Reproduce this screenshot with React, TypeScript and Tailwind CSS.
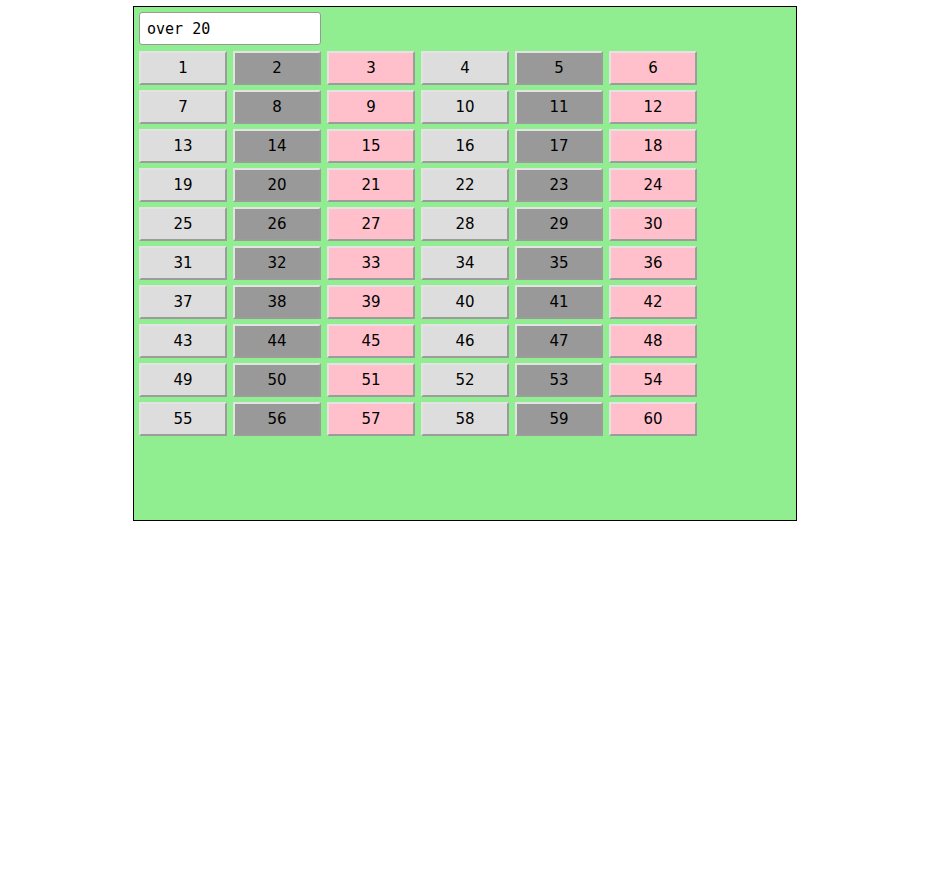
import React, { useState } from "react"

const colors = [
  "bg-[#dddddd]",
  "bg-[#999999]",
  "bg-[#ffc0cb]",
]

export default function App() {
  const [text, setText] = useState("over 20")
  const nums = Array.from({ length: 60 }, (_, i) => i + 1)

  return (
    <div className="pt-[6px] pl-[133px]">
      <div className="w-[664px] h-[515px] border border-black bg-[#90ee90] p-[5px]">
        <input
          value={text}
          onChange={(e) => setText(e.target.value)}
          className="block w-[182px] h-[33px] rounded-[3px] border border-[#999] bg-white px-[7px] text-[15px] text-black outline-none"
          style={{ fontFamily: "'DejaVu Sans Mono', monospace" }}
        />
        <div className="mt-[6px] grid grid-cols-[repeat(6,88px)] gap-x-[6px] gap-y-[5px]">
          {nums.map((n, i) => (
            <button
              key={n}
              className={`${colors[i % 3]} h-[34px] pt-[1px] border-2 border-t-[#e3e3e3] border-l-[#e3e3e3] border-b-[#9c9c9c] border-r-[#9c9c9c] text-[15px] text-black flex items-center justify-center`}
              style={{ fontFamily: "'DejaVu Sans', sans-serif" }}
            >
              {n}
            </button>
          ))}
        </div>
      </div>
    </div>
  )
}
